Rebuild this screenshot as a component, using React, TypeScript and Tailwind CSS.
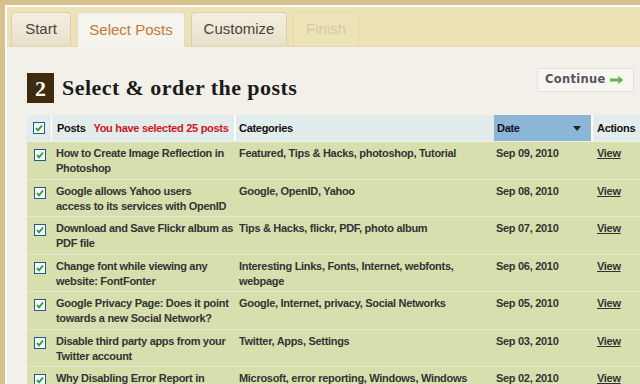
import React from "react";

const rows = [
  { t: ["How to Create Image Reflection in", "Photoshop"], c: ["Featured, Tips & Hacks, photoshop, Tutorial"], d: "Sep 09, 2010" },
  { t: ["Google allows Yahoo users", "access to its services with OpenID"], c: ["Google, OpenID, Yahoo"], d: "Sep 08, 2010" },
  { t: ["Download and Save Flickr album as", "PDF file"], c: ["Tips & Hacks, flickr, PDF, photo album"], d: "Sep 07, 2010" },
  { t: ["Change font while viewing any", "website: FontFonter"], c: ["Interesting Links, Fonts, Internet, webfonts,", "webpage"], d: "Sep 06, 2010" },
  { t: ["Google Privacy Page: Does it point", "towards a new Social Network?"], c: ["Google, Internet, privacy, Social Networks"], d: "Sep 05, 2010" },
  { t: ["Disable third party apps from your", "Twitter account"], c: ["Twitter, Apps, Settings"], d: "Sep 03, 2010" },
  { t: ["Why Disabling Error Report in", "Windows is a Bad Idea"], c: ["Microsoft, error reporting, Windows, Windows", "7"], d: "Sep 02, 2010" },
];

function Check() {
  return (
    <svg width="12" height="12" viewBox="0 0 12 12" className="block">
      <rect x="0.5" y="0.5" width="11" height="11" fill="#f4f8fb" stroke="#2a5a8a" />
      <path d="M3 6 L5 8.3 L9 3.5" fill="none" stroke="#22a02a" strokeWidth="1.8" />
    </svg>
  );
}

export default function App() {
  const sans = { fontFamily: '"Liberation Sans", Arial, sans-serif' };
  return (
    <div className="w-[640px] h-[384px] overflow-hidden bg-[#d6c08c] pt-[5px] pl-[5px]" style={sans}>
      <div className="h-full bg-white pt-[2px] pl-[2px]">
        <div className="h-full bg-[#f3f0ea]">
          {/* Tab bar */}
          <div className="h-[40px] bg-[#ece2b6] border-b border-[#e2d8ac] flex items-end pl-[4px] gap-[6px]">
            <div className="w-[60px] h-[34px] rounded-t-[4px] border border-b-0 border-[#d9d0b2] bg-gradient-to-b from-[#f3eee0] to-[#e7e0c8] flex items-center justify-center text-[15px] text-[#444]">Start</div>
            <div className="w-[108px] h-[35px] mb-[-1px] rounded-t-[4px] border border-b-0 border-[#e0dac8] bg-[#f6f4ef] flex items-center justify-center text-[15px] text-[#c27a34]">Select Posts</div>
            <div className="w-[96px] h-[34px] rounded-t-[4px] border border-b-0 border-[#d9d0b2] bg-gradient-to-b from-[#f3eee0] to-[#e7e0c8] flex items-center justify-center text-[15px] text-[#444]">Customize</div>
            <div className="w-[66px] h-[34px] rounded-t-[4px] border border-b-0 border-[#e4daae] bg-[#ede3b8] flex items-center justify-center text-[15px] text-[#d3cba6]">Finish</div>
          </div>
          {/* Heading */}
          <div className="flex items-start pl-[20px] pt-[21px] pr-[6px]">
            <div className="w-[27px] h-[30px] mt-[5px] bg-[#3d2a0f] text-white flex items-center justify-center text-[22px] font-bold" style={{ fontFamily: '"Liberation Serif", serif' }}>2</div>
            <div className="ml-[8px] mt-[7px] text-[22px] leading-[26px] font-bold text-[#1b1b1b] tracking-[0.45px]" style={{ fontFamily: '"Liberation Serif", serif' }}>Select &amp; order the posts</div>
            <div className="ml-auto w-[97px] h-[24px] bg-[#f8f6f2] border border-[#e6e2da] flex items-center pl-[7px] gap-[3px] text-[11.5px] font-bold text-[#555]" style={{ fontFamily: '"DejaVu Sans", sans-serif' }}>
              <span className="tracking-[0.3px]">Continue</span>
              <svg width="15" height="10" viewBox="0 0 16 10">
                <path d="M1 3.5 H10 V0.5 L15 5 L10 9.5 V6.5 H1 Z" fill="#5cb84a" />
              </svg>
            </div>
          </div>
          {/* Table */}
          <div className="ml-[20px] mt-[12px] text-[11px] font-bold text-[#333] tracking-[-0.3px]">
            <div className="flex h-[27px] bg-[#e3ecec] border-b border-[#eef0e6]">
              <div className="w-[25px] flex items-center justify-center border-r border-white"><Check /></div>
              <div className="w-[184px] flex items-center pl-[5px] border-r-2 border-white text-[#111] whitespace-nowrap">
                Posts<span className="ml-[8px] text-[#d0141a]">You have selected 25 posts</span>
              </div>
              <div className="w-[258px] flex items-center pl-[3px] text-[#111]">Categories</div>
              <div className="w-[97px] flex items-center pl-[3px] bg-[#8cb6d8] text-[#112]">
                Date
                <svg width="8" height="5" viewBox="0 0 8 5" className="ml-auto mr-[10px]"><path d="M0 0 H8 L4 5 Z" fill="#222" /></svg>
              </div>
              <div className="flex-1 flex items-center pl-[4px] border-l-2 border-white text-[#111]">Actions</div>
            </div>
            {rows.map((r, i) => (
              <div key={i} className="flex h-[37.5px] bg-[#d8dfaf] border-b border-[#e5e9cc] leading-[15px]">
                <div className="w-[25px] flex justify-center pt-[7px]"><Check /></div>
                <div className="w-[184px] pl-[4px] pt-[4px]">
                  {r.t.map((l, j) => <div key={j} className="whitespace-nowrap">{l}</div>)}
                </div>
                <div className="w-[258px] pl-[3px] pt-[4px]">
                  {r.c.map((l, j) => <div key={j} className="whitespace-nowrap">{l}</div>)}
                </div>
                <div className="w-[97px] pl-[2px] pt-[4px] whitespace-nowrap">{r.d}</div>
                <div className="flex-1 pl-[6px] pt-[4px] underline">View</div>
              </div>
            ))}
          </div>
        </div>
      </div>
    </div>
  );
}
